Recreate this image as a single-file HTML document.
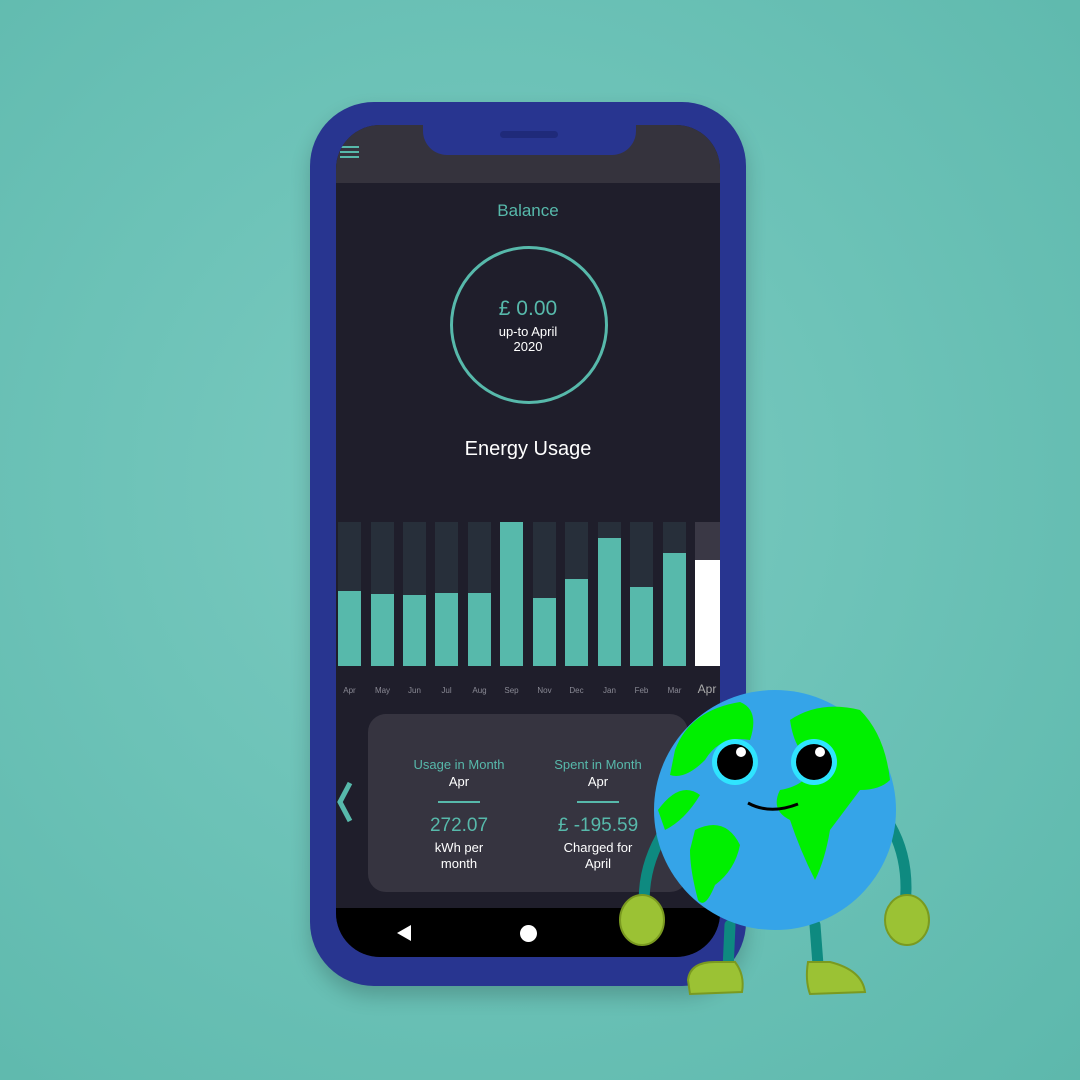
<!DOCTYPE html>
<html><head><meta charset="utf-8"><style>
*{margin:0;padding:0;box-sizing:border-box}
body{width:1080px;height:1080px;overflow:hidden;background:radial-gradient(circle at 45% 45%,#7ccbc1 0%,#6cc2b7 50%,#5db8ac 100%);font-family:"Liberation Sans",sans-serif;position:relative}
.abs{position:absolute}
.phone{left:310px;top:102px;width:436px;height:884px;border-radius:64px;background:#283590;box-shadow:0 10px 20px rgba(0,0,0,.2)}
.screen{left:336px;top:125px;width:384px;height:832px;border-radius:44px;background:#1f1e2b;overflow:hidden}
.top{left:0;top:0;width:384px;height:58px;background:#35333d}
.notch{left:87px;top:0;width:213px;height:30px;background:#283590;border-radius:0 0 24px 24px}
.t{position:absolute;text-align:center;color:#fff}
.bar{position:absolute;top:397px;width:23px;height:144px;background:#272f3a}
.bar i{position:absolute;left:0;bottom:0;width:100%;background:#57b9ab}
.lab{position:absolute;top:561px;width:23px;text-align:center;color:#8a8a95;font-size:8px}
</style></head><body>
<div class="abs phone"></div>
<div class="abs screen">
 <div class="abs top"></div>
 <div class="abs notch"><div class="abs" style="left:77px;top:6px;width:58px;height:7px;border-radius:4px;background:#1f2a7a"></div></div>
 <div class="abs" style="left:4px;top:21px;width:19px;height:2px;background:#57b9ab;box-shadow:0 5px 0 #57b9ab,0 10px 0 #57b9ab"></div>
 <div class="t" style="left:0;width:384px;top:76px;font-size:17px;color:#57b9ab">Balance</div>
 <div class="abs" style="left:114px;top:121px;width:158px;height:158px;border:3px solid #57b9ab;border-radius:50%"></div>
 <div class="t" style="left:0;width:384px;top:172px;font-size:21px;color:#57b9ab">£ 0.00</div>
 <div class="t" style="left:0;width:384px;top:199px;font-size:13px;line-height:15px">up-to April<br>2020</div>
 <div class="t" style="left:0;width:384px;top:313px;font-size:20px">Energy Usage</div>
 <div class="bar" style="left:2px"><i style="height:75px"></i></div>
 <div class="bar" style="left:35px"><i style="height:72px"></i></div>
 <div class="bar" style="left:67px"><i style="height:71px"></i></div>
 <div class="bar" style="left:99px"><i style="height:73px"></i></div>
 <div class="bar" style="left:132px"><i style="height:73px"></i></div>
 <div class="bar" style="left:164px"><i style="height:144px"></i></div>
 <div class="bar" style="left:197px"><i style="height:68px"></i></div>
 <div class="bar" style="left:229px"><i style="height:87px"></i></div>
 <div class="bar" style="left:262px"><i style="height:128px"></i></div>
 <div class="bar" style="left:294px"><i style="height:79px"></i></div>
 <div class="bar" style="left:327px"><i style="height:113px"></i></div>
 <div class="bar" style="left:359px;width:25px;background:#3a3845"><i style="height:106px;background:#fff"></i></div>
 <div class="lab" style="left:2px">Apr</div><div class="lab" style="left:35px">May</div><div class="lab" style="left:67px">Jun</div><div class="lab" style="left:99px">Jul</div><div class="lab" style="left:132px">Aug</div><div class="lab" style="left:164px">Sep</div><div class="lab" style="left:197px">Nov</div><div class="lab" style="left:229px">Dec</div><div class="lab" style="left:262px">Jan</div><div class="lab" style="left:294px">Feb</div><div class="lab" style="left:327px">Mar</div>
 <div class="lab" style="left:358px;top:557px;font-size:12px;width:26px;color:#aaa">Apr</div>
 <div class="abs" style="left:32px;top:589px;width:320px;height:178px;border-radius:18px;background:#363440"></div>
 <svg class="abs" style="left:0;top:655px" width="20" height="45"><path d="M14 3 L4 22 L14 41" stroke="#57b9ab" stroke-width="5" fill="none"/></svg>
 <div class="t" style="left:52px;width:142px;top:632px;font-size:13px;color:#57b9ab">Usage in Month</div>
 <div class="t" style="left:52px;width:142px;top:649px;font-size:13px">Apr</div>
 <div class="abs" style="left:102px;top:676px;width:42px;height:2px;background:#57b9ab"></div>
 <div class="t" style="left:52px;width:142px;top:690px;font-size:19px;color:#57b9ab">272.07</div>
 <div class="t" style="left:52px;width:142px;top:715px;font-size:13px;line-height:16px">kWh per<br>month</div>
 <div class="t" style="left:192px;width:140px;top:632px;font-size:13px;color:#57b9ab">Spent in Month</div>
 <div class="t" style="left:192px;width:140px;top:649px;font-size:13px">Apr</div>
 <div class="abs" style="left:241px;top:676px;width:42px;height:2px;background:#57b9ab"></div>
 <div class="t" style="left:192px;width:140px;top:690px;font-size:19px;color:#57b9ab">£ -195.59</div>
 <div class="t" style="left:192px;width:140px;top:715px;font-size:13px;line-height:16px">Charged for<br>April</div>
 <div class="abs" style="left:0;top:783px;width:384px;height:49px;background:#000"></div>
 <svg class="abs" style="left:60px;top:799px" width="16" height="18"><path d="M1 9 L15 1 L15 17 Z" fill="#fff"/></svg>
 <div class="abs" style="left:184px;top:800px;width:17px;height:17px;border-radius:50%;background:#fff"></div>
</div>
<svg class="abs" style="left:610px;top:680px" width="340" height="330">
 <g stroke="#0e8a80" stroke-width="11" fill="none" stroke-linecap="round">
  <path d="M55 150 Q30 190 35 235"/><path d="M280 145 Q300 180 295 225"/>
  <path d="M120 245 L118 290"/><path d="M205 245 L208 285"/>
 </g>
 <g fill="#9bc234" stroke="#7a9a20" stroke-width="2">
  <ellipse cx="32" cy="240" rx="22" ry="25"/><ellipse cx="297" cy="240" rx="22" ry="25"/>
  <path d="M78 300 Q80 282 105 282 L125 282 Q135 295 132 312 L80 314 Z"/>
  <path d="M198 282 L220 282 Q252 290 255 312 L200 314 Q195 300 198 282 Z"/>
 </g>
 <ellipse cx="165" cy="130" rx="121" ry="120" fill="#35a4e8"/>
 <g fill="#00f000">
  <path d="M65 70 Q80 30 130 22 Q150 30 140 60 Q110 55 95 80 Q75 100 60 95 Z"/>
  <path d="M48 130 Q70 100 90 115 Q75 140 55 150 Z"/>
  <path d="M85 150 Q115 135 130 165 Q125 190 105 205 Q95 230 88 220 Q80 190 80 170 Z"/>
  <path d="M180 40 Q210 20 250 30 Q275 55 280 100 Q270 110 250 110 Q235 130 220 150 Q215 180 205 200 Q190 170 180 140 Q160 130 170 110 Q200 105 205 80 Q185 75 180 40 Z"/>
  <path d="M240 60 Q260 45 270 60 Z"/>
 </g>
 <circle cx="125" cy="82" r="23" fill="#2fe4ff"/><circle cx="125" cy="82" r="18" fill="#000"/><circle cx="131" cy="72" r="5" fill="#fff"/>
 <circle cx="204" cy="82" r="23" fill="#2fe4ff"/><circle cx="204" cy="82" r="18" fill="#000"/><circle cx="210" cy="72" r="5" fill="#fff"/>
 <path d="M138 123 Q160 135 188 124" stroke="#000" stroke-width="3" fill="none"/>
</svg>
</body></html>
